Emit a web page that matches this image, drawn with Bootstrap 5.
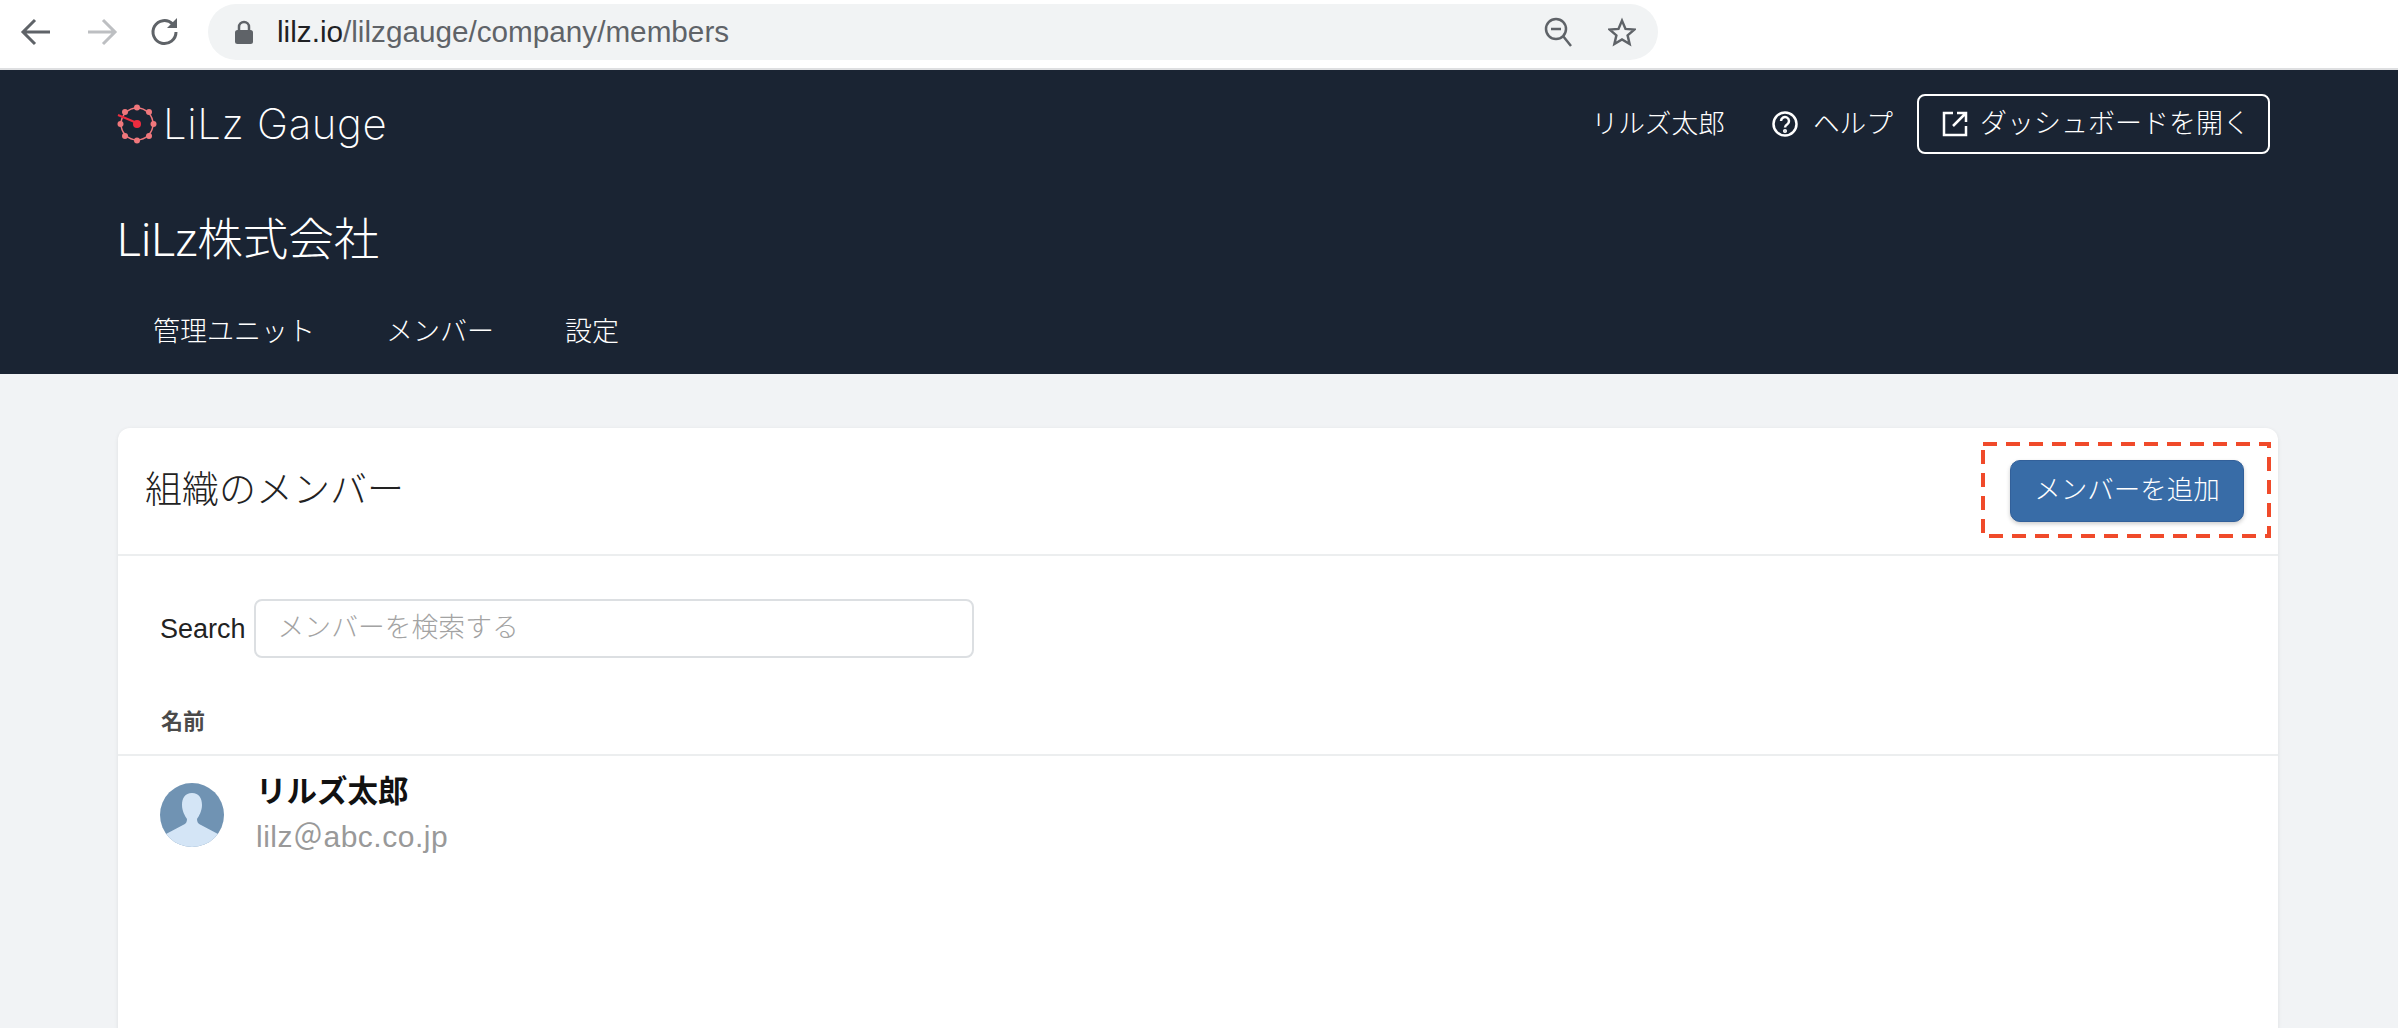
<!DOCTYPE html>
<html lang="ja">
<head>
<meta charset="utf-8">
<title>LiLz Gauge</title>
<link href="https://cdn.jsdelivr.net/npm/bootstrap@5.3.0/dist/css/bootstrap.min.css" rel="stylesheet">
<style>
:root{--jp:"Liberation Sans","Noto Sans CJK JP",sans-serif;}
html,body{height:100%;overflow:hidden;}
body{font-family:var(--jp);background:#f1f3f5;color:#222;font-weight:300;}
.chrome-bar{height:70px;background:#fff;border-bottom:2px solid #dedfe1;padding:0 0 4px 15px;}
.chrome-btn{width:44px;height:44px;flex:none;margin-right:20px;}
.omni{width:1450px;height:56px;margin-left:1px;background:#f1f3f4;border-radius:28px;padding:0 22px 0 27px;font-size:29.700px;color:#5f6368;font-weight:400;}
.omni b{font-weight:400;color:#202124;}
.lock{margin-right:24px;}
.omni-star{margin-left:36px;}
.app-head{background:#1a2433;height:304px;color:#fff;padding:24px 128px 0 117px;}
.logo-text{font-family:Inter,sans-serif;font-weight:200;font-size:42px;line-height:56px;letter-spacing:.6px;margin-left:6px;}
.head-link{font-size:26.700px;color:#fff;margin-right:24px;}
.user-link{margin-right:46px;}
.help-link{gap:14px;}
.open-btn{height:60px;width:353px;border:2px solid #fff;border-radius:8px;color:#fff;font-size:27px;font-weight:300;padding:0 0 0 23px;display:flex;align-items:center;gap:12px;background:none;}
.org-title{font-family:Roboto,"Noto Sans CJK JP",sans-serif;font-size:45.500px;font-weight:300;line-height:60px;margin-top:57px;}
.org-nav{margin-top:41px;gap:71px;padding-left:36px;font-size:27px;line-height:40px;}
.org-nav a{color:#fff;text-decoration:none;}
.page-body{padding:54px 120px 0 118px;}
.main-card{height:800px;border:0;border-radius:12px;box-shadow:0 1px 4px rgba(0,0,0,.08);position:relative;}
.main-head{height:128px;padding:0 34px 0 27px;border-bottom:2px solid #eceeef;}
.main-title{font-size:37px;font-weight:300;margin:0;color:#222;}
.add-btn{width:234px;height:62px;background:#386ca7;border:1px solid #32609a;border-radius:10px;color:#fff;font-size:26.500px;font-weight:300;box-shadow:0 2px 4px rgba(0,0,0,.2);padding:0;}
.add-btn:hover{background:#386ca7;color:#fff;}
.dash-box{position:absolute;top:14px;right:7px;width:290px;height:96px;pointer-events:none;}
.search-row{padding:43px 0 0 42px;}
.search-label{font-size:27px;font-weight:400;margin:2px 8px 0 0;}
.search-input{width:720px;height:59px;border:2px solid #dcdfe2;border-radius:8px;font-size:26.800px;padding:0 22px;font-weight:300;}
.search-input::placeholder{color:#a3a3a3;}
.col-name{font-size:22px;font-weight:700;color:#4a4a4a;padding:49px 0 17px 43px;line-height:30px;border-bottom:2px solid #eceeef;}
.member-row{padding:14px 0 0 42px;gap:32px;}
.avatar-svg{margin-top:13px;flex:none;}
.member-name{font-size:30.500px;font-weight:700;color:#111;line-height:42px;}
.member-mail{font-size:30px;font-weight:400;color:#999;line-height:50px;letter-spacing:.5px;}
</style>
</head>
<body>
<div class="chrome-bar d-flex align-items-center">
  <svg class="chrome-btn" viewBox="0 0 44 44" fill="none" stroke="#5f6368" stroke-width="3"><path d="M35 22H9M20 10 8 22l12 12"/></svg>
  <svg class="chrome-btn" viewBox="0 0 44 44" fill="none" stroke="#bdbfc2" stroke-width="3"><path d="M9 22h26M24 10l12 12-12 12"/></svg>
  <svg class="chrome-btn" viewBox="0 0 44 44" fill="none" stroke="#5f6368" stroke-width="3"><path d="M33 22a11.500 11.500 0 1 1-3.400-8.100"/><path d="M34 8v10H24" fill="#5f6368" stroke="none"/></svg>
  <div class="omni d-flex align-items-center">
    <svg class="lock" width="18" height="24" viewBox="0 0 18 24"><path d="M4 10V7a5 5 0 0 1 10 0v3" fill="none" stroke="#5f6368" stroke-width="2.500"/><rect x="0" y="10" width="18" height="14" rx="2.500" fill="#5f6368"/></svg>
    <span><b>lilz.io</b>/lilzgauge/company/members</span>
    <svg class="ms-auto" width="28" height="30" viewBox="0 0 28 30" fill="none" stroke="#5f6368" stroke-width="2.500"><circle cx="12" cy="12" r="10"/><path d="M7 12h10M19 19l8 10"/></svg>
    <svg class="omni-star" width="28" height="30" viewBox="0 0 32 32" fill="none" stroke="#5f6368" stroke-width="2.800"><path d="m16 3 4 9.500 10 .8-7.600 6.500 2.300 9.900L16 24.500 7.300 29.700l2.300-9.900L2 13.300l10-.8z"/></svg>
  </div>
</div>

<header class="app-head">
  <div class="d-flex align-items-center justify-content-between">
    <div class="d-flex align-items-center">
      <svg width="40" height="40" viewBox="0 0 40 40">
        <circle cx="20" cy="20" r="16" fill="none" stroke="#f0777c" stroke-width="1.500"/>
        <g fill="#f0777c"><circle cx="20" cy="3.500" r="3"/><circle cx="32" cy="8" r="3"/><circle cx="36.500" cy="20" r="3"/><circle cx="32" cy="32" r="3"/><circle cx="20" cy="36.500" r="3"/><circle cx="8" cy="32" r="3"/><circle cx="3.500" cy="20" r="3"/><circle cx="8" cy="8" r="3"/></g>
        <path d="M1 11 20 19" stroke="#ee2c3f" stroke-width="2"/><circle cx="20" cy="20" r="4" fill="#ee2c3f"/>
      </svg>
      <span class="logo-text">LiLz Gauge</span>
    </div>
    <div class="d-flex align-items-center">
      <span class="head-link user-link">リルズ太郎</span>
      <span class="head-link help-link d-flex align-items-center">
        <svg width="28" height="28" viewBox="0 0 28 28" fill="none" stroke="#fff" stroke-width="2.500"><circle cx="14" cy="14" r="11.500"/><path d="M10 11a4 4 0 1 1 6.300 3.300c-1.500 1-2.300 1.700-2.300 3.200"/><circle cx="14" cy="21" r=".8"/></svg>
        ヘルプ
      </span>
      <button class="open-btn" type="button">
        <svg width="26" height="26" viewBox="0 0 26 26" fill="none" stroke="#fff" stroke-width="2.500"><path d="M11 2H2v22h22v-9M15 2h9v9M24 2 11 15"/></svg>
        ダッシュボードを開く
      </button>
    </div>
  </div>
  <div class="org-title">LiLz株式会社</div>
  <nav class="org-nav d-flex">
    <a href="#">管理ユニット</a>
    <a href="#">メンバー</a>
    <a href="#">設定</a>
  </nav>
</header>

<main class="page-body">
  <section class="card main-card">
    <div class="main-head d-flex align-items-center justify-content-between">
      <h1 class="main-title">組織のメンバー</h1>
      <button class="btn add-btn" type="button">メンバーを追加</button>
    </div>
    <svg class="dash-box" viewBox="0 0 290 96" fill="none"><rect x="2" y="2" width="286" height="92" stroke="#f04a2a" stroke-width="4" stroke-dasharray="14 9"/></svg>
    <div class="search-row d-flex align-items-center">
      <label class="search-label" for="member-search">Search</label>
      <input id="member-search" class="search-input form-control" placeholder="メンバーを検索する">
    </div>
    <div class="col-name">名前</div>
    <div class="member-row d-flex">
      <svg class="avatar-svg" width="64" height="64" viewBox="0 0 64 64">
        <defs><clipPath id="av"><circle cx="32" cy="32" r="32"/></clipPath></defs>
        <g clip-path="url(#av)"><rect width="64" height="64" fill="#7093b3"/>
        <path d="M32 10c-7 0-10 5-10 12 0 6 3 11 5 14 0 3-1 5-4 6L6 51v13h52V51l-17-9c-3-1-4-3-4-6 2-3 5-8 5-14 0-7-3-12-10-12z" fill="#d4e5f6"/></g>
      </svg>
      <div>
        <div class="member-name">リルズ太郎</div>
        <div class="member-mail">lilz＠abc.co.jp</div>
      </div>
    </div>
  </section>
</main>
<script src="https://cdn.jsdelivr.net/npm/bootstrap@5.3.0/dist/js/bootstrap.bundle.min.js"></script>
</body>
</html>
